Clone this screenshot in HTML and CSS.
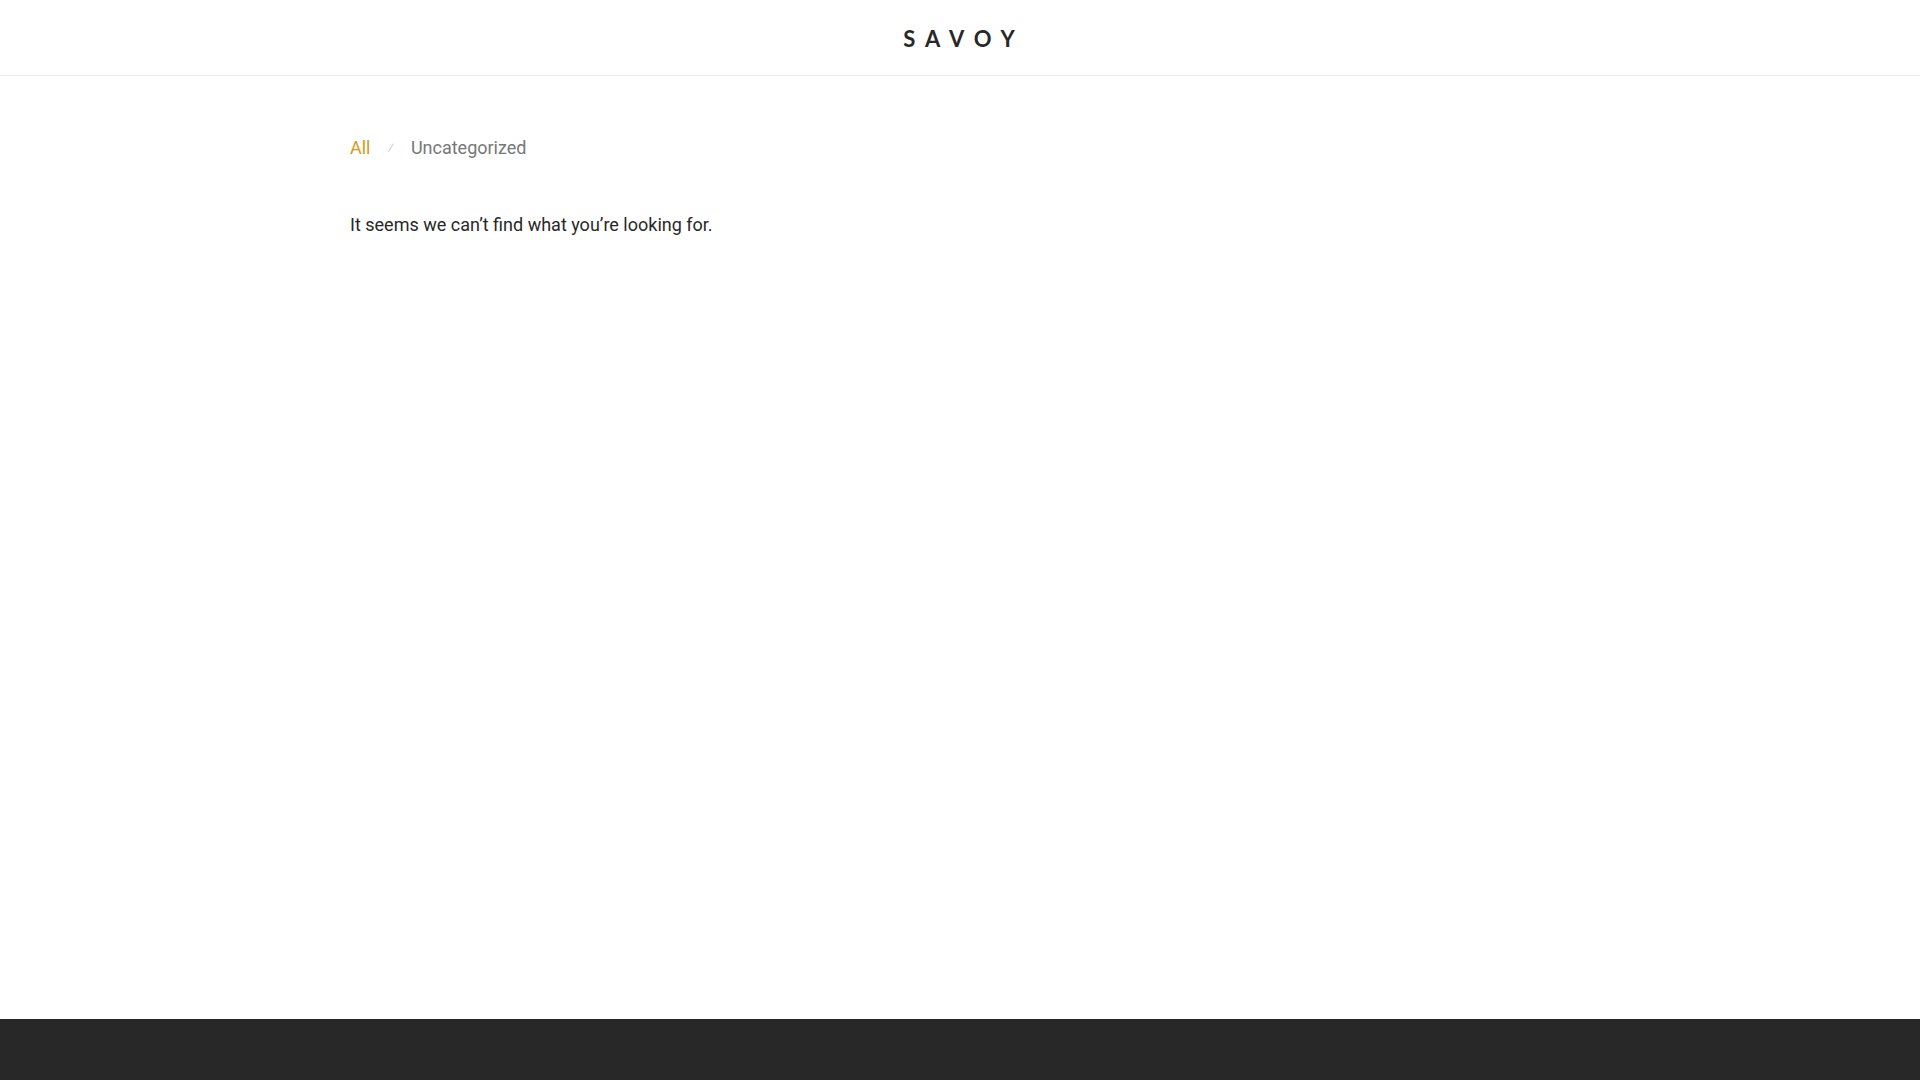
FILE: index.html
```html
<!DOCTYPE html>
<html lang="en">
<head>
  <meta charset="UTF-8">
  <meta name="viewport" content="width=device-width, initial-scale=1">
  <title>Savoy</title>
  <link rel="stylesheet" href="styles.css">
</head>
<body>

  <header class="header">
    <a href="#" class="logo">SAVOY</a>
  </header>

  <main class="content">
    <nav class="categories">
      <a href="#" class="current">All</a>
      <span class="divider">⁄</span>
      <a href="#">Uncategorized</a>
    </nav>
    <p class="no-results">It seems we can’t find what you’re looking for.</p>
  </main>

  <footer class="footer"></footer>

</body>
</html>
```
FILE: styles.css
```css
* {
  box-sizing: border-box;
}
body {
  margin: 0;
  min-height: 100vh;
  display: flex;
  flex-direction: column;
  font-family: Roboto, sans-serif;
  font-size: 18px;
  line-height: 28px;
  color: #282828;
  background: #fff;
}
a {
  color: #777;
  text-decoration: none;
}
.header {
  display: flex;
  justify-content: center;
  padding: 25px 0 22px;
  border-bottom: 1px solid #eaeaea;
}
.header .logo {
  font-family: Lato, sans-serif;
  font-size: 22px;
  font-weight: bold;
  letter-spacing: 10px;
  padding-left: 8px;
  color: #282828;
}
.content {
  flex: 1;
  width: 100%;
  max-width: 1250px;
  margin: 0 auto;
  padding: 58px 15px;
}
.categories {
  display: flex;
  gap: 17px;
}
.categories .current {
  color: #dc9814;
}
.categories .divider {
  font-size: 14px;
  color: #ccc;
}
.no-results {
  margin: 49px 0 0;
}
.footer {
  height: 61px;
  background: #282828;
}
```
